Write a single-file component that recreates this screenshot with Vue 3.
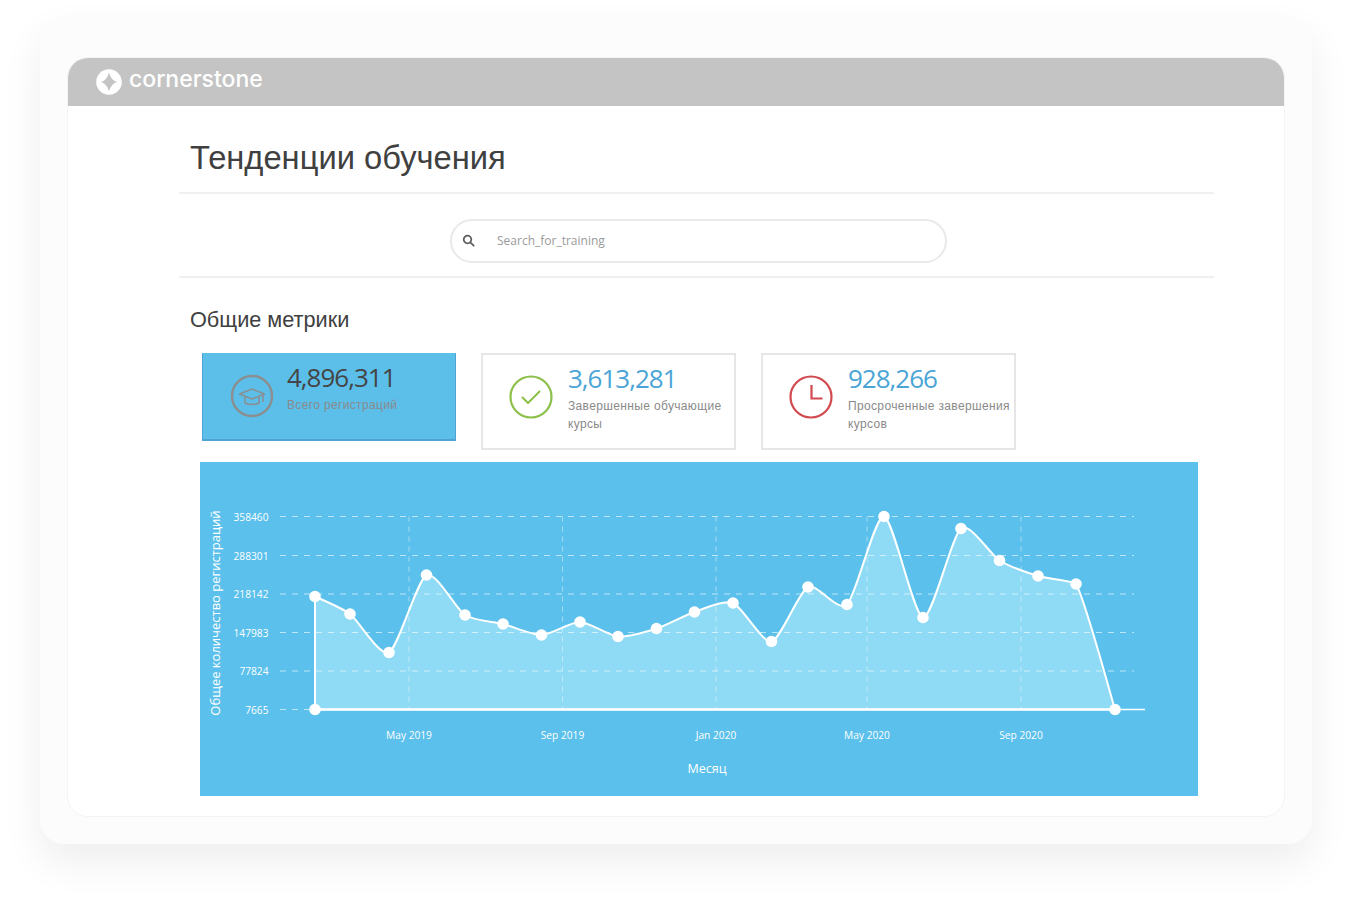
<script setup>
const ox = 200, oy = 462
const raw = [[315,596.5],[350,614],[389,652.5],[426.5,575],[465,615],[503,624],[541.5,635],[580,622],[618,636.5],[656.5,628.5],[694.5,612],[733,603],[771.5,641.5],[808,587],[847,604.5],[884,516.5],[923,617.5],[961,528.5],[999.5,560.5],[1038,576],[1076,584],[1115,709.5]]
const pts = raw.map(([x, y]) => [x - ox, y - oy])
const baseY = 709.5 - oy
function curve(p) {
  const k = 0.12
  let d = `M${p[0][0]} ${p[0][1]}`
  for (let i = 0; i < p.length - 1; i++) {
    const a = p[Math.max(i - 1, 0)], b = p[i], c = p[i + 1], e = p[Math.min(i + 2, p.length - 1)]
    // the drop after the last-but-one point is so steep that its tangent is damped on the way in
    const inK = i === p.length - 3 ? k * 0.2 : k
    d += ` C${b[0] + (c[0] - a[0]) * k} ${b[1] + (c[1] - a[1]) * k} ${c[0] - (e[0] - b[0]) * inK} ${c[1] - (e[1] - b[1]) * inK} ${c[0]} ${c[1]}`
  }
  return d
}
const linePath = curve(pts)
const areaPath = `${linePath} L${pts[0][0]} ${baseY} Z`
const hGrid = [[516.5,'358460'],[555.5,'288301'],[594,'218142'],[632.5,'147983'],[671,'77824'],[709.5,'7665']].map(([y, t]) => ({ y: y - oy, t }))
const vGrid = [[409,'May 2019'],[562.5,'Sep 2019'],[716,'Jan 2020'],[867,'May 2020'],[1021,'Sep 2020']].map(([x, t]) => ({ x: x - ox, t }))
</script>

<template>
  <div class="page">
    <div class="frame">
      <div class="window">
        <header class="bar">
          <svg class="logo-mark" width="26" height="26" viewBox="0 0 26 26">
            <path fill="#fff" fill-rule="evenodd" d="M13 .2a12.800 12.800 0 1 1 0 25.600 12.800 12.800 0 0 1 0-25.600ZM13 3.500Q14.800 11 21 13 14.800 15 13 22.500 11.200 15 5 13 11.200 11 13 3.500Z"/>
          </svg>
          <span class="logo-text">cornerstone</span>
        </header>
        <main class="content">
          <h1 class="title">Тенденции обучения</h1>
          <div class="search-row">
            <div class="search">
              <svg width="13" height="13" viewBox="0 0 13 13" fill="none" stroke="#5f5f5f" stroke-width="1.800">
                <circle cx="5.500" cy="5.500" r="3.800"/>
                <path d="M8.300 8.300l3.400 3.400" stroke-linecap="round"/>
              </svg>
              <span>Search_for_training</span>
            </div>
          </div>
          <h2 class="section">Общие метрики</h2>
          <div class="cards">
            <div class="card active">
              <svg class="ic" width="44" height="44" viewBox="0 0 44 44" fill="none" stroke="#8b8f92">
                <circle cx="22" cy="22" r="20" stroke-width="2.500"/>
                <path d="M9.500 20 22 15l12.500 5L22 25Z" stroke-width="1.500" stroke-linejoin="round"/>
                <path d="M15 23v6c3.500 2 10.500 2 14 0v-6M33 21v7" stroke-width="1.500"/>
              </svg>
              <div class="txt">
                <div class="num">4,896,311</div>
                <div class="lbl">Всего регистраций</div>
              </div>
            </div>
            <div class="card">
              <svg class="ic" width="44" height="44" viewBox="0 0 44 44" fill="none" stroke="#8dc04a">
                <circle cx="22" cy="22" r="20.500" stroke-width="2.200"/>
                <path d="M13.500 22.500l5.500 5.500 11.500-11.500" stroke-width="2" stroke-linecap="round" stroke-linejoin="round"/>
              </svg>
              <div class="txt">
                <div class="num">3,613,281</div>
                <div class="lbl">Завершенные обучающие курсы</div>
              </div>
            </div>
            <div class="card">
              <svg class="ic" width="44" height="44" viewBox="0 0 44 44" fill="none" stroke="#d2494f">
                <circle cx="22" cy="22" r="20.500" stroke-width="2.200"/>
                <path d="M22.500 10v13.500h11" stroke-width="2.200"/>
              </svg>
              <div class="txt">
                <div class="num">928,266</div>
                <div class="lbl">Просроченные завершения курсов</div>
              </div>
            </div>
          </div>
          <div class="chart">
            <svg width="998" height="334" viewBox="0 0 998 334">
              <path :d="areaPath" fill="#8fdaf5"/>
              <g stroke="#fff" stroke-opacity=".6" stroke-width="1" stroke-dasharray="6 6">
                <line v-for="h in hGrid" :key="h.y" x1="80" x2="934" :y1="h.y" :y2="h.y"/>
              </g>
              <g stroke="#fff" stroke-opacity=".45" stroke-width="1" stroke-dasharray="5 5">
                <line v-for="v in vGrid" :key="v.x" :x1="v.x" :x2="v.x" :y1="hGrid[0].y" :y2="baseY"/>
              </g>
              <path :d="`M${pts[0][0]} ${baseY}H945`" stroke="#fff" stroke-width="1.500" fill="none"/>
              <path :d="`M${pts[0][0]} ${baseY}H915`" stroke="#fff" stroke-width="2.500" fill="none"/>
              <path :d="`M${pts[0][0]} ${baseY}V${pts[0][1]}`" stroke="#fff" stroke-width="2" fill="none"/>
              <path :d="linePath" stroke="#fff" stroke-width="2" fill="none"/>
              <circle v-for="p in pts" :key="p[0]" :cx="p[0]" :cy="p[1]" r="5.800" fill="#fff"/>
              <circle :cx="pts[0][0]" :cy="baseY" r="5.800" fill="#fff"/>
              <text v-for="h in hGrid" :key="h.t" class="tick" x="68.500" :y="h.y + 4" text-anchor="end">{{ h.t }}</text>
              <text v-for="v in vGrid" :key="v.t" class="tick" :x="v.x" y="277" text-anchor="middle">{{ v.t }}</text>
              <text class="axis" x="507" y="311" text-anchor="middle">Месяц</text>
              <text class="axis-y" transform="translate(20 151) rotate(-90)" text-anchor="middle">Общее количество регистраций</text>
            </svg>
          </div>
        </main>
      </div>
    </div>
  </div>
</template>

<style>
html, body { margin: 0; background: #fff; }
</style>

<style scoped>
.page {
  width: 1352px;
  height: 904px;
  overflow: hidden;
  padding: 17px 40px 0;
  box-sizing: border-box;
}
.frame {
  height: 827px;
  padding: 41px 28px 0;
  box-sizing: border-box;
  background: #fcfcfc;
  border-radius: 24px;
  box-shadow: 0 18px 40px rgba(0, 0, 0, .07);
}
.window {
  height: 758px;
  background: #fff;
  border-radius: 20px;
  box-shadow: 0 0 0 1px #f4f4f4;
  overflow: hidden;
}
.bar {
  height: 48px;
  background: #c4c4c4;
  display: flex;
  align-items: center;
  padding-left: 28px;
  gap: 7px;
}
.logo-mark { flex: none; }
.logo-text {
  font: 500 23px/1 Inter, "Noto Sans", sans-serif;
  color: #fff;
  margin-top: -5px;
}
.content {
  margin: 0 70px 0 111px;
  font-family: "Liberation Sans", sans-serif;
}
.title {
  margin: 0;
  height: 88px;
  box-sizing: border-box;
  padding: 33px 0 0 11px;
  font: 400 32.700px/38px "Liberation Sans", sans-serif;
  color: #404040;
  border-bottom: 2px solid #f0f0f0;
}
.search-row {
  height: 84px;
  box-sizing: border-box;
  padding: 25px 0 0 271px;
  border-bottom: 2px solid #f0f0f0;
}
.search {
  width: 497px;
  height: 44px;
  box-sizing: border-box;
  border: 2px solid #e9e9e9;
  border-radius: 22px;
  display: flex;
  align-items: center;
  padding: 0 0 2px 10px;
  gap: 22px;
  font: 400 12px "Open Sans", sans-serif;
  color: #9a9a9a;
}
.section {
  margin: 0;
  padding: 29px 0 0 11px;
  font: 400 21.700px/26px "Liberation Sans", sans-serif;
  color: #404040;
}
.cards {
  display: flex;
  align-items: flex-start;
  gap: 25px;
  margin: 20px 0 0 23px;
}
.card {
  width: 255px;
  height: 97px;
  box-sizing: border-box;
  border: 2px solid #e6e6e6;
  display: flex;
  align-items: flex-start;
  padding: 0 4px 0 26px;
  gap: 15px;
  background: #fff;
}
.card.active {
  width: 254px;
  height: 88px;
  background: #5bbfea;
  border: 1px solid #5bbfea;
  border-bottom: 2px solid #4fa3d4;
  border-left-color: #4fa3d4;
  border-right-color: #4fa3d4;
  padding-left: 27px;
  gap: 13px;
}
.ic { flex: none; margin-top: 20px; }
.txt { min-width: 0; }
.num {
  font: 400 26px/36px "Open Sans", sans-serif;
  letter-spacing: -1px;
  color: #4aa5d6;
  margin-top: 5px;
}
.active .num { color: #454545; }
.lbl {
  font: 400 12px/18px "Liberation Sans", sans-serif;
  color: #8a8a8a;
  letter-spacing: .35px;
  margin-top: 1px;
}
.chart {
  width: 998px;
  height: 334px;
  margin: 12px 0 0 21px;
  background: #5bc0eb;
}
.chart svg { display: block; }
.tick {
  font: 400 10.200px "Open Sans", sans-serif;
  fill: #fff;
}
.axis {
  font: 400 12.500px "Open Sans", sans-serif;
  fill: #fff;
}
.axis-y {
  font: 400 13px "Open Sans", sans-serif;
  fill: #fff;
}
</style>
